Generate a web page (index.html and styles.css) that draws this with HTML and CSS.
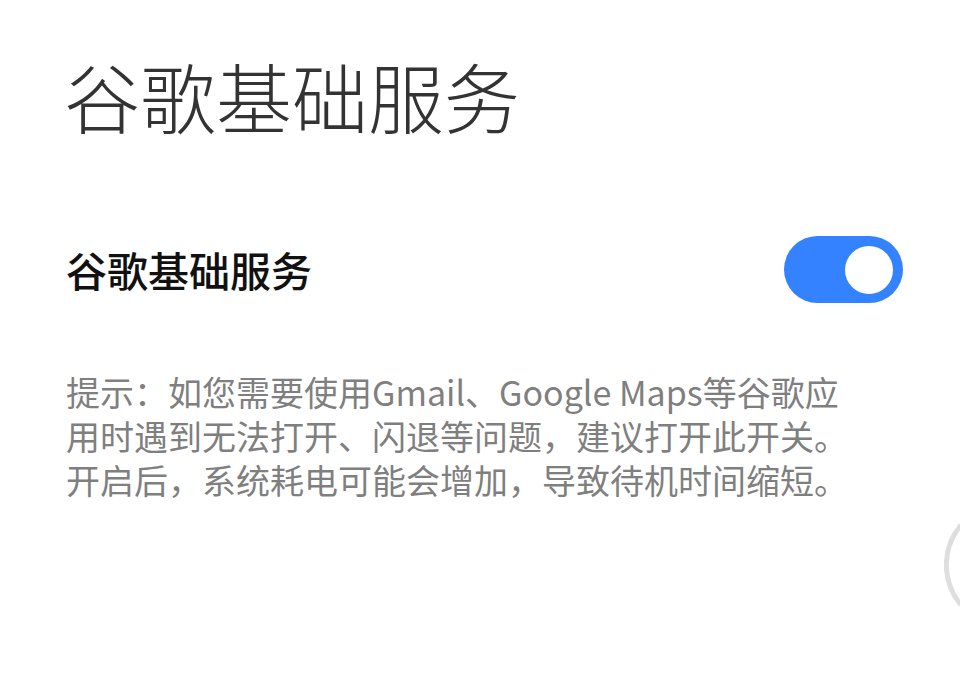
FILE: index.html
```html
<!DOCTYPE html>
<html lang="zh-CN">
<head>
<meta charset="utf-8">
<link rel="stylesheet" href="styles.css">
</head>
<body>
<div class="page">
  <h1 class="title">谷歌基础服务</h1>
  <div class="row">
    <span class="row-label">谷歌基础服务</span>
    <span class="toggle"><span class="knob"></span></span>
  </div>
  <p class="hint"><span class="line">提示：如您需要使用Gmail、Google Maps等谷歌应</span><span class="line">用时遇到无法打开、闪退等问题，建议打开此开关。</span><span class="line">开启后，系统耗电可能会增加，导致待机时间缩短。</span></p>
</div>
<svg class="edge-arc" width="16" height="84" viewBox="0 0 16 84">
  <path d="M 17 2 A 62 62 0 0 0 17 82" fill="none" stroke="#dedede" stroke-width="5"/>
</svg>
</body>
</html>
```
FILE: styles.css
```css
html, body {
  margin: 0;
  padding: 0;
  background: #ffffff;
  width: 960px;
  height: 696px;
  overflow: hidden;
  position: relative;
}
body {
  font-family: "Noto Sans CJK SC", "Noto Sans", sans-serif;
}
.page {
  padding: 57px 57px 0 64px;
}
.title {
  margin: 0;
  font-size: 76px;
  line-height: 76px;
  font-weight: 300;
  color: #333333;
  letter-spacing: 0;
}
.row {
  margin-top: 103px;
  display: flex;
  align-items: center;
  justify-content: space-between;
  height: 67px;
}
.row-label {
  font-size: 41px;
  font-weight: 500;
  color: #111111;
  margin-left: 2px;
  line-height: 41px;
}
.toggle {
  width: 119px;
  height: 67px;
  border-radius: 34px;
  background: #3482ff;
  display: flex;
  align-items: center;
  justify-content: flex-end;
  padding-right: 10px;
  box-sizing: border-box;
}
.knob {
  width: 48px;
  height: 48px;
  border-radius: 50%;
  background: #ffffff;
}
.hint {
  margin: 67px 0 0 2px;
  font-size: 34px;
  color: #7f7f7f;
  white-space: nowrap;
  display: flex;
  flex-direction: column;
}
.line {
  display: block;
  height: 44px;
  line-height: 44px;
}
.edge-arc {
  position: absolute;
  right: 0;
  top: 523px;
  display: block;
}
```
